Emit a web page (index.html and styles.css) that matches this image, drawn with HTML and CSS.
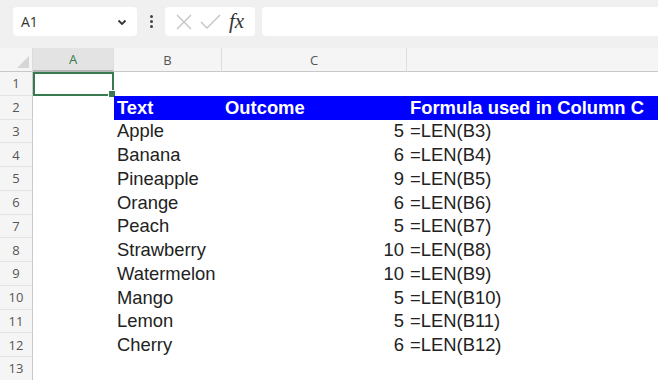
FILE: index.html
```html
<!DOCTYPE html>
<html lang="en">
<head>
    <meta charset="UTF-8">
    <title>LEN function</title>
    <link rel="stylesheet" href="styles.css">
</head>
<body>
    <div class="toolbar">
        <div class="name-box">
            <span>A1</span>
            <svg class="chevron" width="10" height="7" viewBox="0 0 10 7"><path d="M1.5 1.5 L5 5 L8.5 1.5" fill="none" stroke="#333" stroke-width="1.8"/></svg>
        </div>
        <div class="dots"><i></i><i></i><i></i></div>
        <div class="fx-box">
            <svg width="22" height="22" viewBox="0 0 22 22"><path d="M4 4 L18 18 M18 4 L4 18" stroke="#c4c4c4" stroke-width="1.4"/></svg>
            <svg width="24" height="22" viewBox="0 0 24 22"><path d="M3 11 L9 17 L22 4" fill="none" stroke="#c4c4c4" stroke-width="1.4"/></svg>
            <span class="fx">fx</span>
        </div>
        <div class="formula-input"></div>
    </div>

    <div class="sheet">
        <div class="corner"><svg width="12" height="12" viewBox="0 0 12 12"><path d="M12 0 L12 12 L0 12 Z" fill="#d6d6d6"/></svg></div>
        <div class="col-head active">A</div>
        <div class="col-head">B</div>
        <div class="col-head">C</div>
        <div class="col-head last"></div>

        <div class="row-head">1</div>
        <div class="cell selected"><span class="handle"></span></div>
        <div class="cell"></div><div class="cell"></div><div class="cell"></div>

        <div class="row-head">2</div>
        <div class="cell"></div>
        <div class="cell head">Text</div>
        <div class="cell head">Outcome</div>
        <div class="cell head">Formula used in Column C</div>

        <div class="row-head">3</div><div class="cell"></div><div class="cell">Apple</div><div class="cell num">5</div><div class="cell">=LEN(B3)</div>
        <div class="row-head">4</div><div class="cell"></div><div class="cell">Banana</div><div class="cell num">6</div><div class="cell">=LEN(B4)</div>
        <div class="row-head">5</div><div class="cell"></div><div class="cell">Pineapple</div><div class="cell num">9</div><div class="cell">=LEN(B5)</div>
        <div class="row-head">6</div><div class="cell"></div><div class="cell">Orange</div><div class="cell num">6</div><div class="cell">=LEN(B6)</div>
        <div class="row-head">7</div><div class="cell"></div><div class="cell">Peach</div><div class="cell num">5</div><div class="cell">=LEN(B7)</div>
        <div class="row-head">8</div><div class="cell"></div><div class="cell">Strawberry</div><div class="cell num">10</div><div class="cell">=LEN(B8)</div>
        <div class="row-head">9</div><div class="cell"></div><div class="cell">Watermelon</div><div class="cell num">10</div><div class="cell">=LEN(B9)</div>
        <div class="row-head">10</div><div class="cell"></div><div class="cell">Mango</div><div class="cell num">5</div><div class="cell">=LEN(B10)</div>
        <div class="row-head">11</div><div class="cell"></div><div class="cell">Lemon</div><div class="cell num">5</div><div class="cell">=LEN(B11)</div>
        <div class="row-head">12</div><div class="cell"></div><div class="cell">Cherry</div><div class="cell num">6</div><div class="cell">=LEN(B12)</div>
        <div class="row-head">13</div><div class="cell"></div><div class="cell"></div><div class="cell"></div><div class="cell"></div>
    </div>
</body>
</html>
```

FILE: styles.css
```css
body {
    margin: 0;
    width: 658px;
    height: 380px;
    overflow: hidden;
    background: #fff;
    font-family: "Liberation Sans", Arial, sans-serif;
}
.toolbar {
    display: flex;
    align-items: flex-start;
    height: 48px;
    padding: 7px 0 0 13px;
    background: #f0f0f0;
    box-sizing: border-box;
}
.name-box {
    width: 124px;
    height: 29px;
    background: #fff;
    border-radius: 4px;
    display: flex;
    align-items: center;
    justify-content: space-between;
    padding: 0 10px 0 8px;
    box-sizing: border-box;
    font-family: "Open Sans", sans-serif;
    font-size: 14px;
    color: #333;
}
.chevron {
    margin-top: 1px;
}
.dots {
    width: 28px;
    height: 29px;
    display: flex;
    flex-direction: column;
    align-items: center;
    justify-content: center;
    gap: 2px;
}
.dots i {
    width: 3px;
    height: 3px;
    border-radius: 50%;
    background: #444;
}
.fx-box {
    width: 90px;
    height: 29px;
    background: #fff;
    border-radius: 4px;
    display: flex;
    align-items: center;
    gap: 3px;
    padding-left: 8px;
    box-sizing: border-box;
}
.fx {
    font-family: "Liberation Serif", serif;
    font-style: italic;
    font-size: 21px;
    color: #333;
    margin-left: 4px;
}
.formula-input {
    flex: 1;
    height: 29px;
    margin-left: 7px;
    background: #fff;
    border-radius: 4px 0 0 4px;
}
.sheet {
    display: grid;
    grid-template-columns: 33px 81px 108px 185px 1fr;
    grid-template-rows: 24px repeat(13, 23.75px);
}
.corner, .col-head, .row-head {
    background: #f5f5f5;
    font-family: "Open Sans", sans-serif;
    font-size: 13px;
    color: #555;
}
.corner {
    display: flex;
    align-items: flex-end;
    justify-content: flex-end;
    padding: 0 3px 3px 0;
    border-bottom: 1px solid #c8c8c8;
    border-right: 1px solid #dcdcdc;
}
.col-head {
    display: flex;
    align-items: center;
    justify-content: center;
    border-bottom: 1px solid #c8c8c8;
    border-right: 1px solid #dedede;
}
.col-head.active {
    background: #e3e3e3;
    color: #3a7a50;
    border-bottom: 2px solid #b5b5b5;
}
.col-head.last {
    border-right: none;
}
.row-head {
    display: flex;
    align-items: center;
    justify-content: center;
    border-right: 1px solid #c8c8c8;
    border-bottom: 1px solid #e2e2e2;
}
.cell {
    display: flex;
    align-items: center;
    padding-left: 3px;
    font-size: 18.4px;
    color: #222;
    white-space: nowrap;
    overflow: visible;
    position: relative;
}
.cell.head {
    background: #0000ff;
    color: #fff;
    font-weight: bold;
}
.cell.num {
    justify-content: flex-end;
    padding-right: 3px;
}
.cell.selected {
    border: 2px solid #3a7a50;
    box-sizing: border-box;
}
.handle {
    position: absolute;
    right: -4px;
    bottom: -4px;
    width: 6px;
    height: 6px;
    background: #3a7a50;
    border: 1px solid #fff;
}
```
